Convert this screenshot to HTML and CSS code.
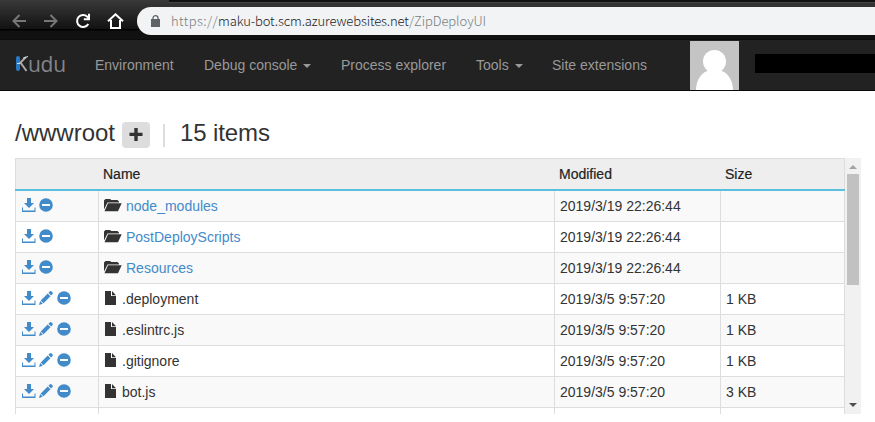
FILE: index.html
```
<!DOCTYPE html>
<html lang="en">
<head>
<meta charset="utf-8">
<title>Kudu</title>
<link rel="stylesheet" href="styles.css">
</head>
<body>
<svg class="defs" aria-hidden="true">
  <symbol id="save" viewBox="0 0 14 14"><path d="M5 0h4v5h3L7 10 2 5h3zM0 9.500h1v3H12.500v-3h1v4.500H0z"/></symbol>
  <symbol id="edit" viewBox="0 0 14 14"><path d="M0 14l1.200-4L3.800 12.700zM1.700 9.500l7-7 2.800 2.800-7 7zM9.400 1.800L11 .3q.7-.5 1.300 0l1.300 1.300q.5.700 0 1.300l-1.500 1.600z"/></symbol>
  <symbol id="remove" viewBox="0 0 14 14"><path fill-rule="evenodd" d="M7 .2a6.800 6.800 0 1 1 0 13.600A6.800 6.800 0 0 1 7 .2zM3 6v2h8V6z"/></symbol>
  <symbol id="folder" viewBox="0 0 18 14"><path d="M0 11.500V2.500L1.500 1H6l1.400 1h6L15 3.500V4.500H3.500zM4 5.200H17.700L14 13.300H.5z"/></symbol>
  <symbol id="file" viewBox="0 0 11 14"><path d="M0 0h6v5h5v9H0zM7 0L11 4.200H7z"/></symbol>
</svg>
<header class="browser">
  <div class="tools">
    <svg width="14" height="14" viewBox="0 0 14 14" class="dim"><path d="M14 7H1.500M7.500 1L1.500 7l6 6"/></svg>
    <svg width="14" height="14" viewBox="0 0 14 14" class="dim"><path d="M0 7h12.500M6.500 1l6 6-6 6"/></svg>
    <svg width="16" height="16" viewBox="0 0 16 16" class="lit"><path d="M13.300 11A6 6 0 1 1 12.300 3.700L14 5.600M14 .8v5.400H8.800"/></svg>
    <svg width="17" height="16" viewBox="0 0 17 16" class="lit"><path d="M1 8.300L8.500 1.300 16 8.300M4 7v8h9V7"/></svg>
  </div>
  <div class="address">
    <svg width="9" height="12" viewBox="0 0 9 12"><path fill="#5f6368" d="M0 4h9v8H0z"/><path d="M2 5V3a2.500 2.300 0 0 1 5 0v2" fill="none" stroke="#5f6368" stroke-width="1.300"/></svg>
    <div class="url"><span class="scheme">https://</span><span class="host">maku-bot.scm.azurewebsites.net</span><span class="path">/ZipDeployUI</span></div>
  </div>
</header>
<nav class="navbar">
  <a class="brand"><svg width="15" height="18" viewBox="0 0 15 18"><rect x="1" y="1" width="4" height="15" rx="2" fill="#2878c4"/><path d="M4.500 8.500L11 2M5.500 7.500l6 8.500" fill="none" stroke="#aaa" stroke-width="2"/><path d="M8 3.200l5-1.700M2 8.500h3" stroke="#ddd" fill="none"/></svg><span>udu</span></a>
  <a class="env">Environment</a>
  <a class="debug">Debug console<i class="caret"></i></a>
  <a class="process">Process explorer</a>
  <a class="toolmenu">Tools<i class="caret"></i></a>
  <a class="site">Site extensions</a>
  <svg class="avatar" width="49" height="49" viewBox="0 0 49 49"><path fill="#c4c4c4" d="M0 0h49v49H0z"/><ellipse cx="24.500" cy="20.500" rx="11.500" ry="11.500" fill="#fff"/><path fill="#fff" d="M6 49c0-11 7-19.500 14-19.500h9C36 29.500 43 38 43 49z"/></svg>
  <div class="redacted"></div>
</nav>
<main>
  <h1><span class="root">/wwwroot</span><button aria-label="Add"><svg width="14" height="14" viewBox="0 0 14 14"><path d="M5.300 0h3.400v4.700H13.500v3.400H8.700V13H5.300V8.100H.5V4.700h4.800z"/></svg></button><span class="divider"></span><span class="count">15 items</span></h1>
  <div class="viewport">
    <div class="table">
      <div class="row head"><div></div><div>Name</div><div>Modified</div><div>Size</div></div>
      <div class="row odd"><div class="actions"><svg><use href="#save"/></svg><svg><use href="#remove"/></svg></div><div><svg class="folder"><use href="#folder"/></svg><a>node_modules</a></div><div>2019/3/19 22:26:44</div><div></div></div>
      <div class="row"><div class="actions"><svg><use href="#save"/></svg><svg><use href="#remove"/></svg></div><div><svg class="folder"><use href="#folder"/></svg><a>PostDeployScripts</a></div><div>2019/3/19 22:26:44</div><div></div></div>
      <div class="row odd"><div class="actions"><svg><use href="#save"/></svg><svg><use href="#remove"/></svg></div><div><svg class="folder"><use href="#folder"/></svg><a>Resources</a></div><div>2019/3/19 22:26:44</div><div></div></div>
      <div class="row"><div class="actions"><svg><use href="#save"/></svg><svg><use href="#edit"/></svg><svg><use href="#remove"/></svg></div><div><svg class="file"><use href="#file"/></svg>.deployment</div><div>2019/3/5 9:57:20</div><div>1 KB</div></div>
      <div class="row odd"><div class="actions"><svg><use href="#save"/></svg><svg><use href="#edit"/></svg><svg><use href="#remove"/></svg></div><div><svg class="file"><use href="#file"/></svg>.eslintrc.js</div><div>2019/3/5 9:57:20</div><div>1 KB</div></div>
      <div class="row"><div class="actions"><svg><use href="#save"/></svg><svg><use href="#edit"/></svg><svg><use href="#remove"/></svg></div><div><svg class="file"><use href="#file"/></svg>.gitignore</div><div>2019/3/5 9:57:20</div><div>1 KB</div></div>
      <div class="row odd"><div class="actions"><svg><use href="#save"/></svg><svg><use href="#edit"/></svg><svg><use href="#remove"/></svg></div><div><svg class="file"><use href="#file"/></svg>bot.js</div><div>2019/3/5 9:57:20</div><div>3 KB</div></div>
      <div class="row"><div></div><div></div><div></div><div></div></div>
    </div>
    <div class="scrollbar"><i class="up"></i><div class="thumb"></div><i class="down"></i></div>
  </div>
</main>
</body>
</html>
```
FILE: styles.css
```
* { box-sizing: border-box; }
body { margin: 0; height: 422px; overflow: hidden; background: #fff; color: #333; font: 14px/20px "Liberation Sans", Arial, sans-serif; }
svg { flex: none; display: block; }
.defs { display: none; }

.browser { height: 40px; display: flex; background: linear-gradient(#111 0 2px, #444 2px 3px, #333 3px 7px, transparent 7px) 169px 0 / 100% 100% no-repeat, linear-gradient(#393939 0, #121212 29px, #000 29px 30px, #111 31px 39px, #080808 40px); }
.tools { width: 137px; padding: 13px 0 0 12px; display: flex; align-items: flex-start; gap: 18px; }
.tools svg { fill: none; stroke-width: 2; margin-top: 1px; }
.tools svg:nth-child(3) { margin: 0 -2px 0 -1px; }
.tools svg:nth-child(4) { margin: 0; }
.dim { stroke: #777; }
.lit { stroke: #fff; }
.address { flex: 1; height: 28px; margin-top: 7px; padding-left: 14px; background: #f1f3f4; border-radius: 14px 0 0 14px; display: flex; align-items: center; }
.url { display: flex; margin-left: 11px; font: 300 13px/28px "Noto Sans CJK JP", "Liberation Sans", sans-serif; color: #777c80; white-space: nowrap; }
.url span { flex: none; }
.scheme { width: 47px; letter-spacing: .4px; }
.host { width: 190px; letter-spacing: -.11px; color: #202124; }
.path { padding-left: 1px; letter-spacing: -.08px; }

.navbar { height: 51px; display: flex; align-items: center; background: #222; border-bottom: 1px solid #080808; color: #999; white-space: nowrap; }
.navbar a { flex: none; display: flex; align-items: center; }
.brand { width: 80px; margin-left: 15px; }
.brand svg { margin-top: -2px; }
.brand span { margin: -3px 0 0 -2px; font: 21px/24px "Open Sans", sans-serif; letter-spacing: -.3px; color: #85858b; }
.env { width: 109px; }
.debug { width: 137px; }
.process { width: 135px; }
.toolmenu { width: 76px; }
.site { width: 138px; }
.caret { margin: 2px 0 0 6px; border: 4px solid transparent; border-top-color: #999; border-bottom: 0; }
.avatar { margin-top: 1px; }
.redacted { flex: 1; height: 19px; margin: 0 0 4px 16px; background: #000; }

main { padding: 31px 14px 0 15px; }
h1 { margin: 0 0 10px; height: 26px; display: flex; font-size: 24px; line-height: 22px; font-weight: 400; }
.root { width: 107px; }
button { width: 28px; height: 26px; padding: 0; border: 0; border-radius: 4px; background: #ddd; display: grid; place-items: center; }
button svg { fill: #333; }
.divider { width: 2px; height: 23px; margin: 2px 15px 0 13px; background: #ddd; }
.count { letter-spacing: -.1px; }
.viewport { height: 256px; display: flex; overflow: hidden; }
.table { width: 830px; border-top: 1px solid #ddd; }
.row { height: 31px; display: grid; grid-template-columns: 83px 456px 166px 125px; border-bottom: 1px solid #ddd; }
.row > div { padding: 0 5px; border-left: 1px solid #ddd; display: flex; align-items: center; }
.row > div:last-child { border-right: 1px solid #ddd; }
.odd { background: #f9f9f9; }
.head { height: 32px; background: #eee; border-bottom: 2px solid #5bc0de; color: #222; -webkit-text-stroke: .2px #222; }
.head > div:not(:first-child) { border-left: 0; }
.row a { color: #428bca; }
.row .actions { padding: 0 6px; gap: 4px; }
.actions svg { width: 14px; height: 14px; fill: #428bca; margin-top: -2px; }
.actions svg + svg { margin-left: -1px; }
.actions svg:nth-child(3) { margin-left: 0; }
.folder { width: 18px; height: 14px; margin: -2px 4px 0 0; }
.file { width: 11px; height: 14px; margin: -2px 6px 0 1px; }
.folder, .file { fill: #333; }
.scrollbar { width: 16px; background: #f1f1f1; display: flex; flex-direction: column; align-items: center; }
.up, .down { border: 4px solid transparent; }
.up { margin-top: 7px; border-top: 0; border-bottom-color: #a3a3a3; }
.thumb { width: 12px; height: 111px; margin-top: 5px; background: #c1c1c1; }
.down { margin: auto 0 7px; border-top-color: #505050; border-bottom: 0; }
```
